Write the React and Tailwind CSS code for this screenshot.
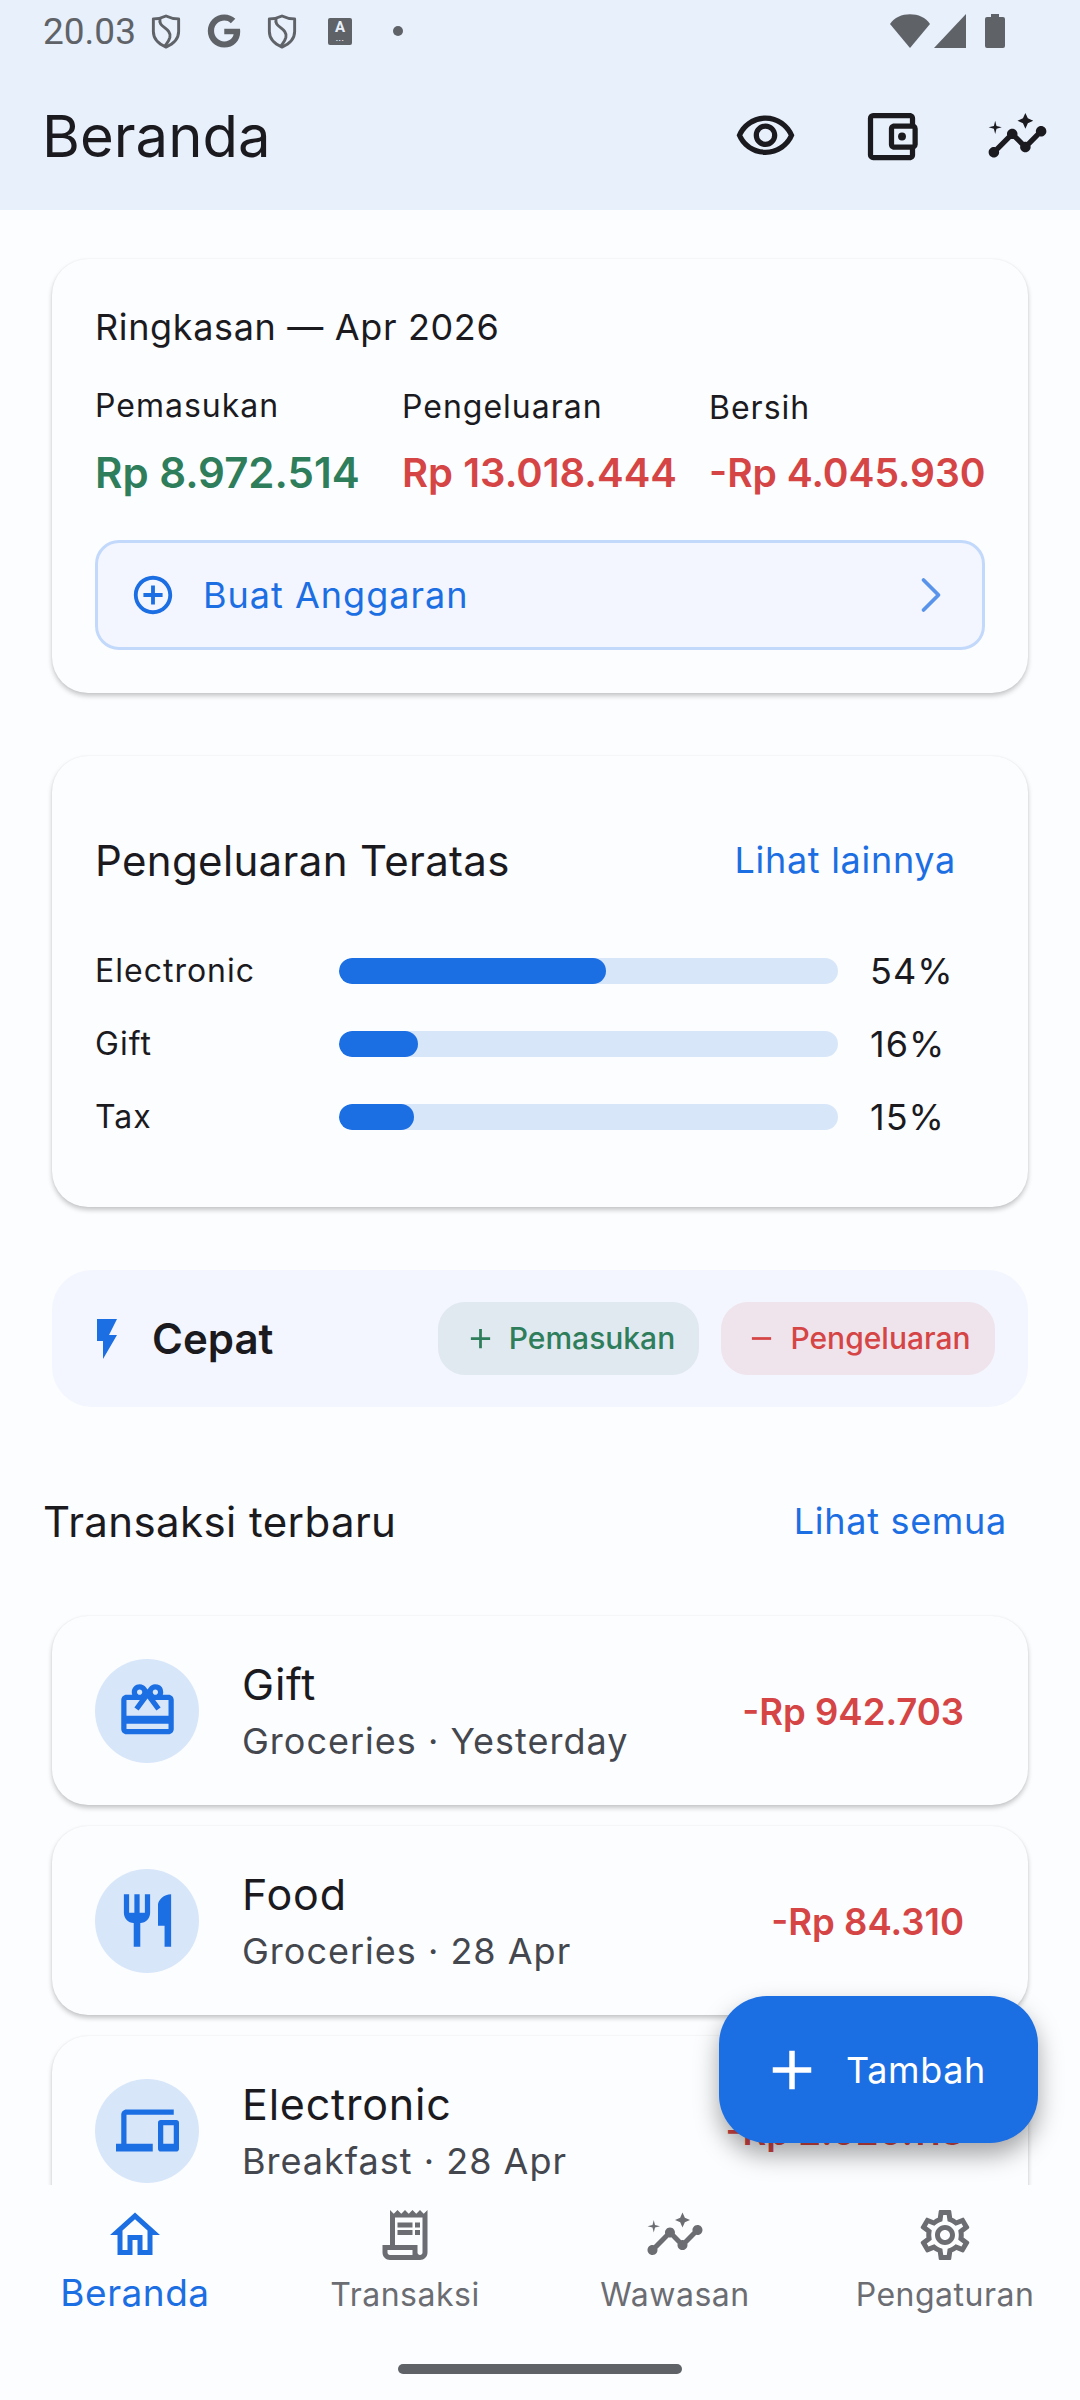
import React from "react";
import {
  MdOutlineVisibility, MdOutlineAccountBalanceWallet, MdInsights, MdOutlineAddCircleOutline,
  MdFlashOn, MdAdd, MdRemove, MdOutlineCardGiftcard, MdRestaurant, MdOutlineDevices,
  MdOutlineHome, MdOutlineReceiptLong, MdOutlineSettings,
} from "react-icons/md";
import { FaGoogle } from "react-icons/fa";
import { ChevronRight } from "lucide-react";

function Shield() {
  return (
    <svg viewBox="0 0 30 36" className="w-[30px] h-[35px]" fill="none" stroke="#5f6368" strokeWidth="3" strokeLinejoin="round">
      <path d="M15 2 C19 4 24 5 28 5 V18 C28 26 22 31 15 34 C8 31 2 26 2 18 V5 C6 5 11 4 15 2 Z" />
      <path d="M9 5 C6 14 21 14 19 24 C18 28 16 30 14 33" />
    </svg>
  );
}

function StatusBar() {
  return (
    <div className="h-[62px] flex items-center justify-between pl-[43px] pr-[75px] text-[#5f6368]">
      <div className="flex items-center">
        <span className="text-[37px] leading-none font-['Roboto',sans-serif] w-[108px]">20.03</span>
        <Shield />
        <FaGoogle className="ml-[26px] w-[34px] h-[34px]" />
        <div className="ml-[26px]"><Shield /></div>
        <div className="ml-[31px] w-[24px] h-[27px] bg-[#5f6368] rounded-[2px] flex flex-col items-center text-[#e8f0fc] font-['Roboto',sans-serif]">
          <span className="text-[15px] font-bold leading-[18px]">A</span>
          <span className="text-[8px] font-bold leading-[6px] tracking-[0.5px]">...</span>
        </div>
        <div className="ml-[41px] w-[10px] h-[10px] rounded-full bg-[#5f6368]" />
      </div>
      <div className="flex items-center gap-[4px]">
        <svg viewBox="0 0 40 34" className="w-[40px] h-[34px]" fill="#5f6368"><path d="M0 10 C8 -3 32 -3 40 10 L20 34 Z" /></svg>
        <svg viewBox="0 0 32 34" className="w-[32px] h-[34px]" fill="#5f6368"><path d="M32 0 V34 H0 Z" /></svg>
        <svg viewBox="0 0 20 34" className="w-[20px] h-[34px] ml-[15px]" fill="#5f6368"><path d="M6 0 H14 V3 H18 Q20 3 20 5 V32 Q20 34 18 34 H2 Q0 34 0 32 V5 Q0 3 2 3 H6 Z" /></svg>
      </div>
    </div>
  );
}

function Header() {
  return (
    <header className="bg-[#e8f0fc] h-[210px] shrink-0">
      <StatusBar />
      <div className="h-[148px] flex items-center justify-between pl-[42px] pr-[31px]">
        <h1 className="text-[58px] leading-none text-[#1b1b1f] font-normal">Beranda</h1>
        <div className="flex items-center gap-[63px] text-[#1b1b1f]">
          <MdOutlineVisibility className="w-[63px] h-[63px]" />
          <MdOutlineAccountBalanceWallet className="w-[63px] h-[63px]" />
          <MdInsights className="w-[63px] h-[63px]" />
        </div>
      </div>
    </header>
  );
}

function Summary({ label, value, color, size, offset }) {
  return (
    <div className="w-[307px] shrink-0 h-[112px] flex flex-col justify-between">
      <div className={`text-[32px] leading-[36px] tracking-[1px] text-[#1b1b1f] ${offset}`}>{label}</div>
      <div className={`leading-[50px] font-semibold whitespace-nowrap ${size} ${color}`}>{value}</div>
    </div>
  );
}

function SummaryCard() {
  return (
    <section className="mx-[52px] mt-[49px] h-[434px] rounded-[36px] bg-[#fcfdff] shadow-[0_3px_5px_rgba(0,0,0,0.22),0_0_2px_rgba(0,0,0,0.06)] px-[43px] pt-[48px]">
      <div className="text-[36px] leading-[40px] tracking-[0.65px] text-[#1b1b1f]">Ringkasan — Apr 2026</div>
      <div className="flex mt-[39px]">
        <Summary label="Pemasukan" value="Rp 8.972.514" color="text-[#2e7d5b]" size="text-[42px]" offset="mt-[2px]" />
        <Summary label="Pengeluaran" value="Rp 13.018.444" color="text-[#d64545]" size="text-[40px]" offset="mt-[3px]" />
        <Summary label="Bersih" value="-Rp 4.045.930" color="text-[#d64545]" size="text-[39px]" offset="mt-[4px]" />
      </div>
      <div className="mt-[42px] h-[110px] rounded-[24px] bg-[#f3f6ff] border-[3px] border-[#c3d9fb] flex items-center pl-[32px] pr-[21px] text-[#1c6ee3]">
        <MdOutlineAddCircleOutline className="w-[46px] h-[46px]" />
        <span className="ml-[27px] text-[36px] tracking-[1px] flex-1">Buat Anggaran</span>
        <ChevronRight className="w-[60px] h-[60px] text-[#5a93ea]" strokeWidth={1.5} />
      </div>
    </section>
  );
}

function Bar({ name, pct, width }) {
  return (
    <div className="flex items-center h-[26px]">
      <span className="w-[244px] text-[32px] tracking-[1px] text-[#1b1b1f] -mt-[1px]">{name}</span>
      <div className="w-[499px] h-[26px] rounded-full bg-[#d8e6fa] overflow-hidden">
        <div className="h-full rounded-full bg-[#1c6ee3]" style={{ width }} />
      </div>
      <span className="ml-[32px] text-[36px] tracking-[1px] text-[#1b1b1f]">{pct}</span>
    </div>
  );
}

function TopCard() {
  return (
    <section className="mx-[52px] mt-[63px] h-[451px] rounded-[36px] bg-[#fcfdff] shadow-[0_3px_5px_rgba(0,0,0,0.22),0_0_2px_rgba(0,0,0,0.06)] px-[43px] pt-[79px]">
      <div className="flex items-center justify-between pr-[29px] h-[50px]">
        <span className="text-[42px] tracking-[0.35px] text-[#1b1b1f]">Pengeluaran Teratas</span>
        <span className="text-[36px] tracking-[0.7px] text-[#1c6ee3]">Lihat lainnya</span>
      </div>
      <div className="mt-[73px] flex flex-col gap-[47px]">
        <Bar name="Electronic" pct="54%" width="267px" />
        <Bar name="Gift" pct="16%" width="79px" />
        <Bar name="Tax" pct="15%" width="75px" />
      </div>
    </section>
  );
}

function QuickBar() {
  return (
    <section className="mx-[52px] mt-[63px] h-[137px] rounded-[40px] bg-[#f3f6fe] flex items-center pl-[43px] pr-[33px]">
      <MdFlashOn className="w-[48px] h-[48px] text-[#1c6ee3] -ml-[12px]" />
      <span className="ml-[21px] text-[42px] font-semibold text-[#1b1b1f] flex-1">Cepat</span>
      <div className="w-[261px] h-[73px] rounded-[27px] bg-[#dfe9ef] flex items-center justify-center pl-[2px] text-[#2e7d5b] text-[30px] font-medium">
        <MdAdd className="w-[33px] h-[33px] mr-[12px]" />Pemasukan
      </div>
      <div className="ml-[22px] w-[274px] h-[73px] rounded-[27px] bg-[#efe3ec] flex items-center justify-center text-[#d64545] text-[30px] font-medium">
        <MdRemove className="w-[33px] h-[33px] mr-[12px]" />Pengeluaran
      </div>
    </section>
  );
}

function TxRow({ Icon, title, sub, amount }) {
  return (
    <div className="h-[189px] shrink-0 rounded-[36px] bg-[#fcfdff] shadow-[0_3px_5px_rgba(0,0,0,0.22),0_0_2px_rgba(0,0,0,0.06)] flex items-center pl-[43px] pr-[64px]">
      <div className="w-[104px] h-[104px] rounded-full bg-[#d8e6fa] flex items-center justify-center text-[#1c6ee3]">
        <Icon className="w-[63px] h-[63px]" />
      </div>
      <div className="ml-[43px] flex-1">
        <div className="text-[43px] leading-[50px] tracking-[0.8px] text-[#1b1b1f]">{title}</div>
        <div className="mt-[10px] text-[36px] leading-[44px] tracking-[1px] text-[#44474e]">{sub}</div>
      </div>
      <div className="mt-[3px] text-[36.5px] font-semibold whitespace-nowrap text-[#d64545]">{amount}</div>
    </div>
  );
}

function NavItem({ Icon, label, active }) {
  return (
    <div className={`w-[270px] flex flex-col items-center ${active ? "text-[#1c6ee3]" : "text-[#6b6d72]"}`}>
      <Icon className="w-[60px] h-[60px]" />
      {active ? (
        <span className="mt-[8px] text-[37px] leading-[40px] tracking-[0.5px]">{label}</span>
      ) : (
        <span className="mt-[10px] text-[32px] leading-[40px] tracking-[0.5px]">{label}</span>
      )}
    </div>
  );
}

export default function App() {
  return (
    <div className="relative w-[1080px] h-[2400px] overflow-hidden bg-[#fcfdff] flex flex-col font-['Inter',sans-serif]">
      <Header />
      <main className="flex-1 min-h-0 overflow-hidden">
        <SummaryCard />
        <TopCard />
        <QuickBar />
        <div className="mt-[86px] pl-[43px] pr-[73px] flex items-center justify-between h-[56px]">
          <span className="text-[42px] tracking-[0.4px] text-[#1b1b1f]">Transaksi terbaru</span>
          <span className="text-[36px] tracking-[0.7px] text-[#1c6ee3]">Lihat semua</span>
        </div>
        <div className="mx-[52px] mt-[67px] flex flex-col gap-[21px]">
          <TxRow Icon={MdOutlineCardGiftcard} title="Gift" sub="Groceries · Yesterday" amount="-Rp 942.703" />
          <TxRow Icon={MdRestaurant} title="Food" sub="Groceries · 28 Apr" amount="-Rp 84.310" />
          <TxRow Icon={MdOutlineDevices} title="Electronic" sub="Breakfast · 28 Apr" amount="-Rp 2.020.113" />
        </div>
      </main>
      <nav className="h-[215px] shrink-0 bg-[#fcfdff] relative z-10 pt-[20px]">
        <div className="flex h-[118px]">
          <NavItem Icon={MdOutlineHome} label="Beranda" active />
          <NavItem Icon={MdOutlineReceiptLong} label="Transaksi" />
          <NavItem Icon={MdInsights} label="Wawasan" />
          <NavItem Icon={MdOutlineSettings} label="Pengaturan" />
        </div>
        <div className="mx-auto mt-[41px] w-[284px] h-[10px] rounded-full bg-[#5f6368]" />
      </nav>
      <div className="absolute left-[719px] top-[1996px] w-[319px] h-[147px] rounded-[48px] bg-[#1c6ee3] text-white flex items-center pl-[40px] shadow-[0_12px_24px_rgba(0,0,0,0.35)] z-20">
        <MdAdd className="w-[66px] h-[66px]" />
        <span className="ml-[21px] text-[36px] tracking-[0.6px]">Tambah</span>
      </div>
    </div>
  );
}
